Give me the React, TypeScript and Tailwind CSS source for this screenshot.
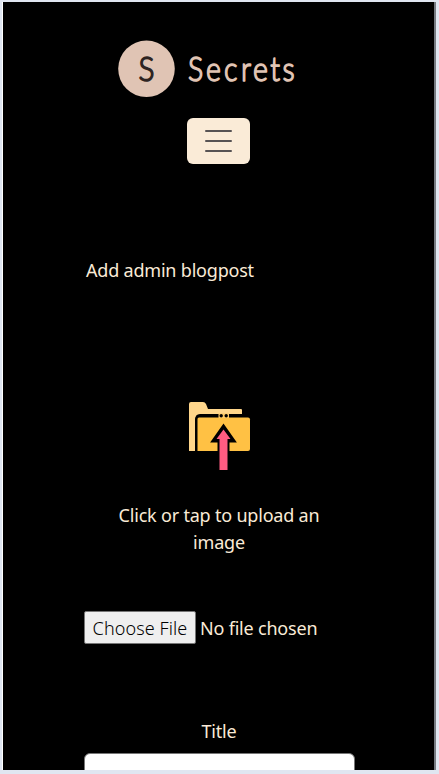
function Logo() {
  return (
    <svg className="block font-['Lato','Liberation_Sans',sans-serif] font-light" width="190" height="58" viewBox="0 0 190 58" role="img" aria-label="Secrets">
      <circle cx="31.500" cy="28.800" r="28.300" fill="#e0c4b4" />
      <g fontSize="34" strokeLinejoin="round" strokeLinecap="round" strokeWidth="1.500">
        <text transform="translate(23.500 40.800) scale(.88 1)" fill="#2e2422" stroke="#2e2422">S</text>
        <g transform="translate(73 40.800) scale(.84 1)" fill="#e0c4b4" stroke="#e0c4b4">
          <text x="0 21.500 43 63 77.500 98 112.500">Secrets</text>
        </g>
      </g>
    </svg>
  );
}

function UploadIcon() {
  return (
    <svg className="block shrink-0" width="64" height="70" viewBox="0 0 64 70" aria-hidden="true">
      <path d="M1 50V3q0-2 2-2h12q2 0 3 2l2 5h33q1 0 1 1v5H12q-5 0-5 6v30z" fill="#ffd68b" />
      <path d="M7 50V19q0-6 5-6h42v4h4v33z" fill="#000" />
      <path d="M9.500 50V18q0-1.500 1.500-1.500h49q2 0 2 2V48q0 2-2 2z" fill="#ffc144" />
      <path d="M30.500 12.500h10.500v4.500H30.500z" fill="#ffcb66" />
      <circle cx="33.200" cy="14.700" r="1.700" fill="#000" />
      <circle cx="38.200" cy="14.700" r="1.700" fill="#000" />
      <path d="M35.500 25L46 40h-6v12h-9V40h-6z" fill="#000" stroke="#000" strokeWidth="3" />
      <path d="M35.500 28.500L42.500 38h-3v31h-8V38h-3z" fill="#ff5c82" />
    </svg>
  );
}

export default function App() {
  return (
    <div className="h-[774px] w-[439px] overflow-hidden bg-[#e0e6f1] pt-[2px] pl-[2px]">
      <main className="flex h-[768px] w-[434px] flex-col overflow-hidden border-r-2 border-l border-r-[#777b82] border-l-white bg-black font-['Noto_Sans','Open_Sans',sans-serif] text-[18px] leading-[27px] tracking-[-0.2px] text-[#faebd7]">
        <div className="mt-[38px] ml-[112px] shrink-0">
          <Logo />
        </div>
        <button className="mt-5 ml-[184px] flex h-[46px] w-[63px] shrink-0 flex-col items-center justify-center gap-2 rounded-[6px] bg-[#faebd7]" aria-label="Menu">
          <span className="h-[2px] w-[27px] shrink-0 rounded-full bg-[#575354]" />
          <span className="h-[2px] w-[27px] shrink-0 rounded-full bg-[#575354]" />
          <span className="h-[2px] w-[27px] shrink-0 rounded-full bg-[#575354]" />
        </button>
        <h1 className="mt-[93px] ml-[83px] shrink-0 whitespace-nowrap">Add admin blogpost</h1>
        <div className="mt-[117px] ml-[185px] shrink-0">
          <UploadIcon />
        </div>
        <p className="mt-[31px] ml-[81px] w-[270px] shrink-0 text-center">
          Click or tap to upload an
          <br />
          image
        </p>
        <div className="mt-[55px] ml-[81px] flex h-[33px] shrink-0 items-center whitespace-nowrap">
          <button className="flex h-[33px] w-[112px] items-center justify-center rounded-[2px] border border-[#767676] bg-[#efefef] pt-px font-light tracking-[0.1px] text-black">
            Choose File
          </button>
          <span className="ml-[4px] pt-[2px]">No file chosen</span>
        </div>
        <label className="mt-[74px] ml-[81px] w-[270px] shrink-0 text-center">Title</label>
        <div className="mt-[8px] ml-[81px] h-[46px] w-[271px] shrink-0 rounded-[6px] border border-[#767676] bg-white" />
      </main>
    </div>
  );
}
